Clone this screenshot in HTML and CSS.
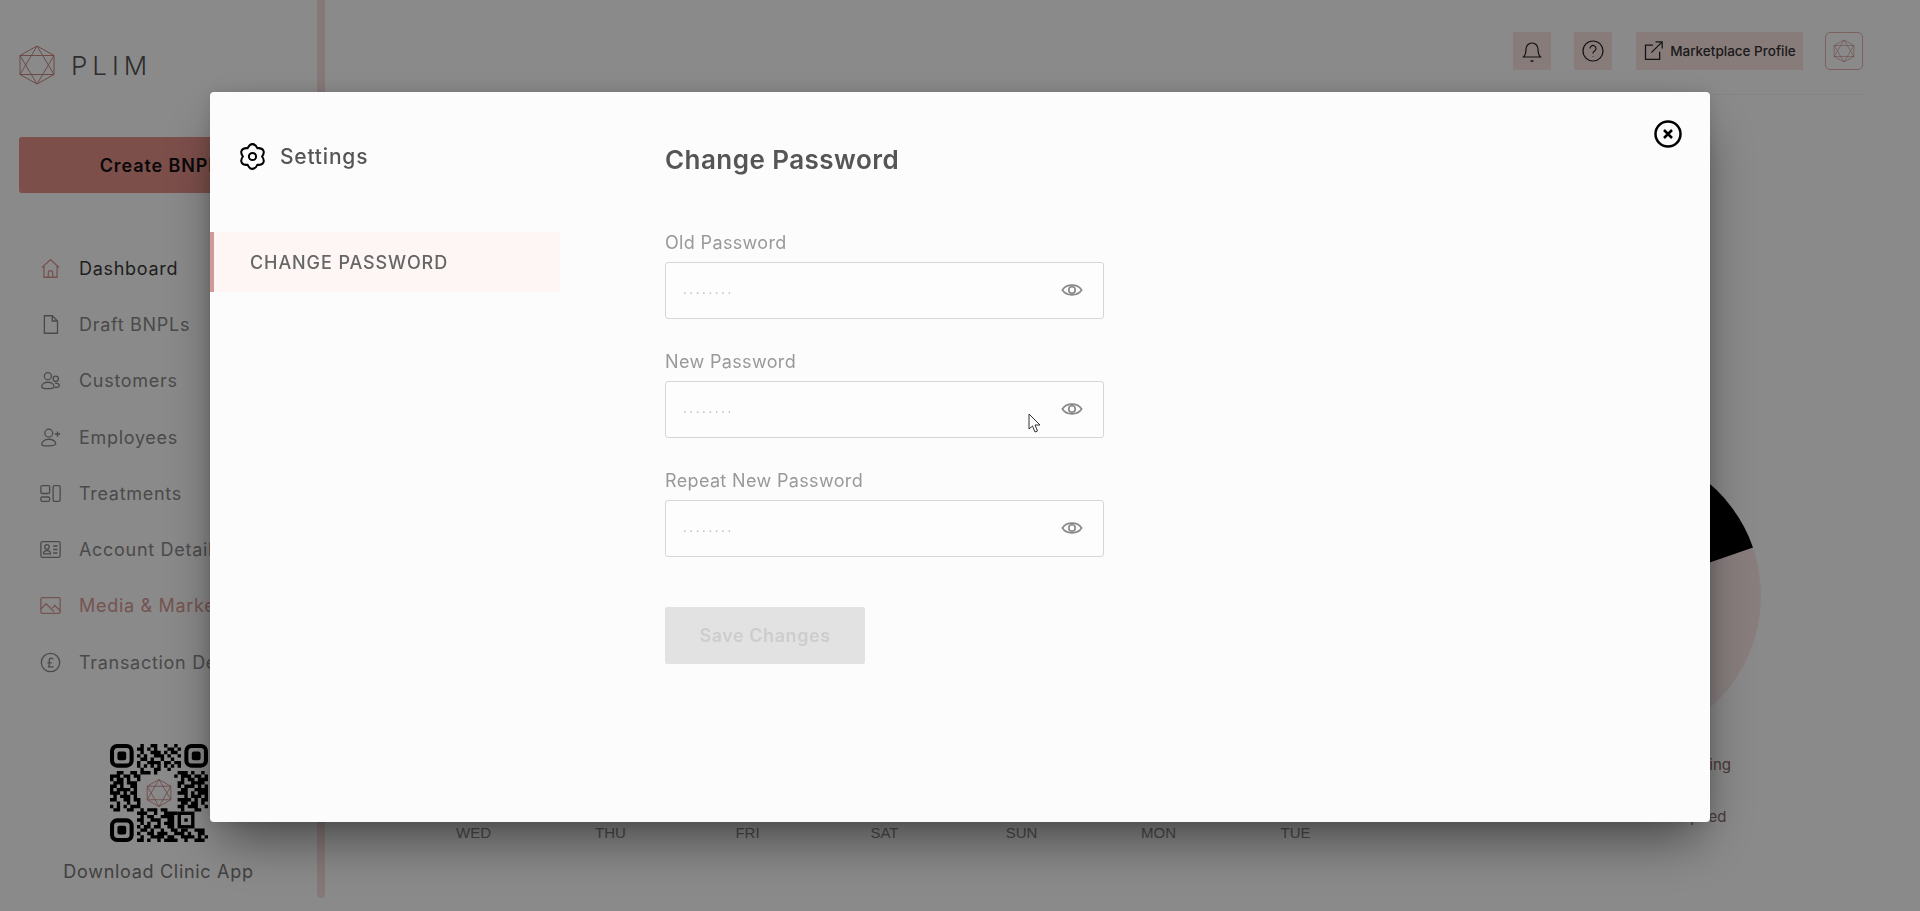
FILE: index.html
```html
<!DOCTYPE html>
<html lang="en">
<head>
  <meta charset="UTF-8">
  <meta name="viewport" content="width=device-width, initial-scale=1.0">
  <title>Settings - Plim</title>
  <link rel="stylesheet" href="styles.css">
</head>
<body>

  <div class="page">
    <aside class="sidebar">
      <div class="logo">
        <svg class="logo-mark" viewBox="0 0 38 40"><path d="M19 1 36 10.500V29.500L19 39 2 29.500V10.500ZM19 1 36 29.500H2ZM19 39 2 10.500H36Z"/></svg>
        <span class="logo-text">PLIM</span>
      </div>
      <button class="create-btn" type="button">Create BNPL</button>

      <nav class="nav">
        <a class="nav-item nav-item-strong">
          <svg class="nav-icon" viewBox="0 0 24 24"><path d="M2 11 12 2l10 9M4.500 9v13h15V9M9.500 22v-5a2.500 2.500 0 0 1 5 0v5"/></svg>
          Dashboard
        </a>
        <a class="nav-item">
          <svg class="nav-icon" viewBox="0 0 24 24"><path d="M14 2H5v20h15V8zM14 2v6h6"/></svg>
          Draft BNPLs
        </a>
        <a class="nav-item">
          <svg class="nav-icon" viewBox="0 0 24 24"><circle cx="9" cy="7" r="4"/><circle cx="18" cy="10" r="3"/><path d="M2 19c0-3 3-5 7-5s7 2 7 5-14 3-14 0zM17 15c3 0 5 1 5 3s-2 2-5 2"/></svg>
          Customers
        </a>
        <a class="nav-item">
          <svg class="nav-icon" viewBox="0 0 24 24"><circle cx="10" cy="7" r="4.500"/><path d="M2 20c0-3.500 3.500-6 8-6s8 2.500 8 5-16 4-16 1zM20 5v6M17 8h6"/></svg>
          Employees
        </a>
        <a class="nav-item">
          <svg class="nav-icon" viewBox="0 0 24 24"><rect x="1" y="3" width="10" height="9" rx="1.500"/><rect x="1" y="16" width="10" height="5" rx="1.500"/><rect x="15" y="3" width="8" height="18" rx="1.500"/></svg>
          Treatments
        </a>
        <a class="nav-item">
          <svg class="nav-icon" viewBox="0 0 24 24"><rect x="1" y="3" width="22" height="18" rx="2"/><circle cx="8" cy="9" r="2.500"/><path d="M4 17c0-5 8-5 8 0zM15 8h5M15 12h5M15 16h5"/></svg>
          Account Details
        </a>
        <a class="nav-item nav-item-active">
          <svg class="nav-icon" viewBox="0 0 24 24"><rect x="1" y="3" width="22" height="18" rx="1.500"/><path d="M1 16l6-6 9 9M14 15l3-3 6 6"/></svg>
          Media &amp; Marketing
        </a>
        <a class="nav-item">
          <svg class="nav-icon" viewBox="0 0 24 24"><circle cx="12" cy="12" r="10.500"/><path d="M15 8.500C14.500 6.500 10.500 6.500 10.500 9.500v5.500c0 1-.7 2-1.500 2h6.500M8.500 12.500h5"/></svg>
          Transaction Details
        </a>
      </nav>

      <div class="app-qr">
        <svg class="qr" viewBox="0 0 29 29">
          <g class="qr-finder">
            <rect x=".6" y=".6" width="5.800" height="5.800" rx="1.500"/>
            <rect x="22.600" y=".6" width="5.800" height="5.800" rx="1.500"/>
            <rect x=".6" y="22.600" width="5.800" height="5.800" rx="1.500"/>
          </g>
          <g class="qr-dot">
            <rect x="2.200" y="2.200" width="2.600" height="2.600" rx=".6"/>
            <rect x="24.200" y="2.200" width="2.600" height="2.600" rx=".6"/>
            <rect x="2.200" y="24.200" width="2.600" height="2.600" rx=".6"/>
            <rect x="22" y="22" width="1" height="1"/>
          </g>
          <rect class="qr-align" x="20.500" y="20.500" width="4" height="4"/>
          <path class="qr-data" d="M9 .5h1M12 .5h2M16 .5h1M19 .5h1M8 1.500h2M11 1.500h1M13 1.500h1M17 1.500h2M20 1.500h1M9 2.500h1M12 2.500h3M16 2.500h1M18 2.500h2M8 3.500h1M10 3.500h1M13 3.500h3M17 3.500h1M20 3.500h1M9 4.500h2M12 4.500h1M15 4.500h1M18 4.500h1M8 5.500h1M11 5.500h4M16 5.500h2M19 5.500h2M8 6.500h1M10 6.500h1M12 6.500h1M14 6.500h1M16 6.500h1M18 6.500h1M20 6.500h1M9 7.500h1M13 7.500h2M17 7.500h1M2 8.500h2M6 8.500h2M9 8.500h3M13 8.500h1M20 8.500h3M24 8.500h1M27 8.500h1M0 9.500h3M4 9.500h2M7 9.500h2M19 9.500h1M21 9.500h3M25 9.500h2M28 9.500h1M0 10.500h1M2 10.500h2M5 10.500h1M8 10.500h1M21 10.500h1M23 10.500h2M26 10.500h3M1 11.500h3M5 11.500h3M20 11.500h2M24 11.500h4M0 12.500h2M3 12.500h1M6 12.500h2M20 12.500h1M22 12.500h3M26 12.500h1M28 12.500h1M0 13.500h1M2 13.500h4M7 13.500h1M21 13.500h2M25 13.500h4M0 14.500h3M4 14.500h1M6 14.500h2M20 14.500h3M24 14.500h1M26 14.500h3M1 15.500h1M3 15.500h3M7 15.500h1M22 15.500h1M24 15.500h3M28 15.500h1M0 16.500h2M4 16.500h2M7 16.500h2M20 16.500h4M25 16.500h1M27 16.500h2M2 17.500h1M5 17.500h1M8 17.500h1M21 17.500h2M24 17.500h2M27 17.500h1M0 18.500h1M2 18.500h1M4 18.500h1M6 18.500h3M20 18.500h2M23 18.500h3M28 18.500h1M1 19.500h2M5 19.500h2M9 19.500h1M11 19.500h3M15 19.500h2M21 19.500h1M25 19.500h2M8 20.500h3M13 20.500h1M16 20.500h4M9 21.500h1M11 21.500h2M15 21.500h4M8 22.500h2M12 22.500h3M17 22.500h2M9 23.500h1M11 23.500h1M14 23.500h1M16 23.500h3M8 24.500h1M10 24.500h2M13 24.500h2M17 24.500h2M9 25.500h2M12 25.500h1M15 25.500h1M18 25.500h2M21 25.500h2M25 25.500h3M8 26.500h1M11 26.500h2M14 26.500h3M19 26.500h3M23 26.500h1M26 26.500h2M9 27.500h1M12 27.500h4M17 27.500h2M21 27.500h4M26 27.500h1M28 27.500h1M8 28.500h2M11 28.500h1M14 28.500h1M16 28.500h4M22 28.500h1M25 28.500h3"/>
          <path class="qr-logo" d="M14.500 10.500 18 12.500v4l-3.500 2-3.500-2v-4zM14.500 10.500 18 16.500H11zM14.500 18.500 11 12.500h7z"/>
        </svg>
        <p class="app-qr-label">Download Clinic App</p>
      </div>
    </aside>

    <div class="rail"></div>

    <main class="main">
      <header class="topbar">
        <button class="top-btn" type="button">
          <svg class="top-icon top-icon-lg" viewBox="0 0 24 24"><path d="M3.500 18c2-2 2.500-4 2.500-8a6 6 0 0 1 12 0c0 4 .5 6 2.500 8zM10.500 21.500l1.500 1 1.500-1"/></svg>
        </button>
        <button class="top-btn" type="button">
          <svg class="top-icon top-icon-lg" viewBox="0 0 24 24"><circle cx="12" cy="12" r="10"/><path d="M9 9.500a3 3 0 1 1 4.500 2.600c-1 .6-1.500 1.200-1.500 2.400M12 17.500v.5"/></svg>
        </button>
        <button class="top-btn top-btn-wide" type="button">
          <svg class="top-icon" viewBox="0 0 24 24"><path d="M12 5H3v17h17v-9M10 14 23 1M15 1h8v8"/></svg>
          Marketplace Profile
        </button>
        <div class="avatar">
          <svg class="avatar-mark" viewBox="0 0 38 40"><path d="M19 1 36 10.500V29.500L19 39 2 29.500V10.500ZM19 1 36 29.500H2ZM19 39 2 10.500H36Z"/></svg>
        </div>
      </header>

      <section class="dash">
        <div class="week">
          <span>WED</span>
          <span>THU</span>
          <span>FRI</span>
          <span>SAT</span>
          <span>SUN</span>
          <span>MON</span>
          <span>TUE</span>
        </div>
        <div class="pie-panel">
          <svg class="pie" viewBox="0 0 296 296">
            <circle class="pie-rest" cx="148" cy="148" r="148"/>
            <path class="pie-black" d="M148 148 288 99.500A148 148 0 0 0 148 0Z"/>
          </svg>
          <ul class="legend">
            <li>Pending</li>
            <li>Expired</li>
          </ul>
        </div>
      </section>
    </main>
  </div>

  <div class="overlay">
    <div class="modal">
      <button class="close-btn" type="button">
        <svg viewBox="0 0 28 28"><circle cx="14" cy="14" r="12.500"/><path d="M10 10l8 8M18 10l-8 8"/></svg>
      </button>

      <div class="modal-side">
        <div class="modal-title">
          <svg class="gear" viewBox="0 0 24 24"><path d="M7.750 4.640C9.800-.2 14.200-.2 16.250 4.640C21.470 4 23.670 7.800 20.500 12C23.670 16.200 21.470 20 16.250 19.360C14.200 24.200 9.800 24.200 7.750 19.360C2.530 20 .33 16.200 3.500 12C.33 7.800 2.530 4 7.750 4.640Z"/><circle cx="12" cy="12" r="3.200"/></svg>
          Settings
        </div>
        <div class="tab">CHANGE PASSWORD</div>
      </div>

      <form class="modal-body">
        <h2>Change Password</h2>

        <label class="field">
          <span class="field-label">Old Password</span>
          <span class="input-wrap">
            <input type="password" placeholder="........">
            <svg class="eye" viewBox="0 0 24 24"><path d="M1.500 12C6 5 18 5 22.500 12C18 19 6 19 1.500 12Z"/><circle cx="12" cy="12" r="3.500"/></svg>
          </span>
        </label>

        <label class="field">
          <span class="field-label">New Password</span>
          <span class="input-wrap">
            <input type="password" placeholder="........">
            <svg class="eye" viewBox="0 0 24 24"><path d="M1.500 12C6 5 18 5 22.500 12C18 19 6 19 1.500 12Z"/><circle cx="12" cy="12" r="3.500"/></svg>
            <svg class="cursor" viewBox="0 0 13 20"><path d="M1 1V16L4.500 13 7 19 9.500 18 7 12H12Z"/></svg>
          </span>
        </label>

        <label class="field">
          <span class="field-label">Repeat New Password</span>
          <span class="input-wrap">
            <input type="password" placeholder="........">
            <svg class="eye" viewBox="0 0 24 24"><path d="M1.500 12C6 5 18 5 22.500 12C18 19 6 19 1.500 12Z"/><circle cx="12" cy="12" r="3.500"/></svg>
          </span>
        </label>

        <button class="save-btn" type="button" disabled>Save Changes</button>
      </form>
    </div>
  </div>

</body>
</html>
```

FILE: styles.css
```css
/* General Styles */
body {
  font-family: Inter, 'Noto Sans', sans-serif;
  background-color: #ffffff;
  margin: 0;
  padding: 0;
  color: #888;
  overflow: hidden;
}

button {
  font-family: inherit;
  border: none;
  padding: 0;
}

.page {
  display: flex;
  height: 911px;
  overflow: hidden;
}

/* Sidebar */
.sidebar {
  width: 317px;
  flex-shrink: 0;
  padding-top: 45px;
  box-sizing: border-box;
}

.logo {
  display: flex;
  align-items: center;
  gap: 15px;
  padding-left: 18px;
}

.logo-mark {
  width: 38px;
  height: 40px;
  fill: none;
  stroke: #c98a85;
  stroke-width: 1;
}

.logo-text {
  font-size: 26px;
  font-weight: 300;
  letter-spacing: 5px;
  color: #555;
}

.create-btn {
  display: block;
  width: 281px;
  height: 56px;
  margin: 52px 0 0 19px;
  background-color: #e7928b;
  border-radius: 3px;
  color: #111;
  font-size: 18px;
  font-weight: 600;
  letter-spacing: .9px;
}

.nav {
  display: flex;
  flex-direction: column;
  margin-top: 47px;
  padding-left: 40px;
}

.nav-item {
  display: flex;
  align-items: center;
  gap: 18px;
  height: 56.300px;
  font-size: 18px;
  letter-spacing: .7px;
  color: #8a8a8a;
  white-space: nowrap;
}

.nav-item-strong {
  color: #3a3a3a;
}

.nav-item-active {
  color: #d99a95;
}

.nav-icon {
  width: 21px;
  height: 21px;
  fill: none;
  stroke: #8a8a8a;
  stroke-width: 1.5;
  flex-shrink: 0;
}

.nav-item-strong .nav-icon,
.nav-item-active .nav-icon {
  stroke: #d99a95;
}

.app-qr {
  margin-top: 54px;
  display: flex;
  flex-direction: column;
  align-items: center;
}

.qr {
  width: 98px;
  height: 98px;
}

.qr-finder rect {
  fill: none;
  stroke: #000;
  stroke-width: 1.200;
}

.qr-dot rect {
  fill: #000;
}

.qr-align {
  fill: none;
  stroke: #000;
  stroke-width: 1;
}

.qr-data {
  fill: none;
  stroke: #000;
  stroke-width: 1;
}

.qr-logo {
  fill: none;
  stroke: #c98a85;
  stroke-width: .25;
}

.app-qr-label {
  margin: 19px 0 0;
  font-size: 18px;
  letter-spacing: .7px;
  color: #777;
}

.rail {
  width: 8px;
  height: 898px;
  flex-shrink: 0;
  background-color: #f5dedd;
  border-radius: 0 0 4px 4px;
}

/* Main */
.main {
  flex: 1;
  min-width: 0;
  padding-right: 57px;
}

.topbar {
  display: flex;
  justify-content: flex-end;
  align-items: center;
  gap: 23px;
  padding: 32px 0 24px;
  border-bottom: 1px solid #f4f4f4;
}

.top-btn {
  display: flex;
  align-items: center;
  justify-content: center;
  gap: 7px;
  width: 38px;
  height: 38px;
  background-color: #fbe6e4;
  color: #333;
  font-size: 13.500px;
  font-weight: 500;
}

.top-btn-wide {
  width: 167px;
  margin-left: 1px;
}

.top-icon {
  width: 20px;
  height: 20px;
  flex-shrink: 0;
  fill: none;
  stroke: #222;
  stroke-width: 1.500;
}

.top-icon-lg {
  width: 24px;
  height: 24px;
  stroke-width: 1.200;
}

.avatar {
  display: flex;
  align-items: center;
  justify-content: center;
  width: 38px;
  height: 38px;
  margin-left: -1px;
  border: 1px solid #e3b6b2;
  border-radius: 5px;
  box-sizing: border-box;
}

.avatar-mark {
  width: 22px;
  height: 24px;
  fill: none;
  stroke: #c98a85;
  stroke-width: 1;
}

.dash {
  display: flex;
  justify-content: space-between;
  padding-top: 353px;
}

.week {
  display: flex;
  align-self: flex-end;
  margin: 0 0 18px 80px;
  font-family: 'Liberation Sans', Arial, sans-serif;
  font-size: 15px;
  color: #8a8a8a;
}

.week span {
  width: 137px;
  text-align: center;
}

.pie-panel {
  width: 300px;
  margin-right: 99px;
}

.pie {
  display: block;
  width: 296px;
  height: 296px;
  margin-left: 1px;
}

.pie-rest {
  fill: #fbe9e9;
}

.pie-black {
  fill: #000;
}

.legend {
  list-style: none;
  margin: 11px 0 0;
  padding: 0 0 0 209px;
  font-size: 15px;
  color: #8a6a68;
}

.legend li {
  height: 52px;
}

/* Modal */
.overlay {
  position: fixed;
  top: 0;
  left: 0;
  right: 0;
  bottom: 0;
  display: flex;
  justify-content: center;
  align-items: flex-start;
  padding-top: 92px;
  box-sizing: border-box;
  background-color: rgba(0, 0, 0, 0.46);
}

.modal {
  position: relative;
  display: flex;
  width: 1500px;
  height: 730px;
  background-color: #fcfcfc;
  border-radius: 4px;
  box-shadow: 0 25px 50px -10px rgba(0, 0, 0, 0.5), 0 0 15px rgba(0, 0, 0, 0.12);
}

.close-btn {
  position: absolute;
  top: 28px;
  right: 28px;
  width: 28px;
  height: 28px;
  background: none;
}

.close-btn svg {
  display: block;
  fill: none;
  stroke: #000;
  stroke-width: 2.500;
}

.modal-side {
  width: 350px;
  flex-shrink: 0;
  padding-top: 50px;
}

.modal-title {
  display: flex;
  align-items: center;
  gap: 14px;
  padding-left: 29px;
  height: 28px;
  font-size: 21px;
  font-weight: 500;
  letter-spacing: .8px;
  color: #555;
}

.gear {
  width: 27px;
  height: 27px;
  fill: none;
  stroke: #000;
  stroke-width: 1.800;
  stroke-linejoin: round;
}

.tab {
  display: flex;
  align-items: center;
  height: 60px;
  margin-top: 62px;
  padding-left: 36px;
  border-left: 4px solid #cf9a98;
  background-color: #fdf6f4;
  font-size: 18px;
  font-weight: 500;
  letter-spacing: .9px;
  color: #666;
}

.modal-body {
  padding: 53px 0 0 105px;
  width: 439px;
}

.modal-body h2 {
  margin: 0 0 57px;
  font-size: 26px;
  line-height: 30px;
  font-weight: 600;
  letter-spacing: .45px;
  color: #555;
}

.field {
  display: block;
  margin-bottom: 32px;
}

.field-label {
  display: block;
  margin-bottom: 8px;
  font-size: 18px;
  line-height: 22px;
  letter-spacing: .35px;
  color: #999;
}

.input-wrap {
  position: relative;
  display: block;
}

.input-wrap input {
  display: block;
  width: 100%;
  height: 57px;
  padding: 0 60px 3px 17px;
  border: 1px solid #d6d6d6;
  border-radius: 3px;
  box-sizing: border-box;
  background-color: #fdfdfd;
  font-family: inherit;
  font-size: 13px;
  letter-spacing: 2.600px;
}

.input-wrap input::placeholder {
  color: #bcbcbc;
}

.eye {
  position: absolute;
  top: 17px;
  right: 21px;
  width: 22px;
  height: 22px;
  fill: none;
  stroke: #888;
  stroke-width: 1.800;
}

.cursor {
  position: absolute;
  top: 32px;
  left: 363px;
  width: 13px;
  height: 20px;
  fill: #fff;
  stroke: #333;
  stroke-width: 1;
}

.save-btn {
  display: block;
  width: 200px;
  height: 57px;
  margin-top: 50px;
  background-color: #e2e2e2;
  border-radius: 2px;
  color: #cdcdcd;
  font-size: 18px;
  font-weight: 600;
  letter-spacing: .55px;
}
```
